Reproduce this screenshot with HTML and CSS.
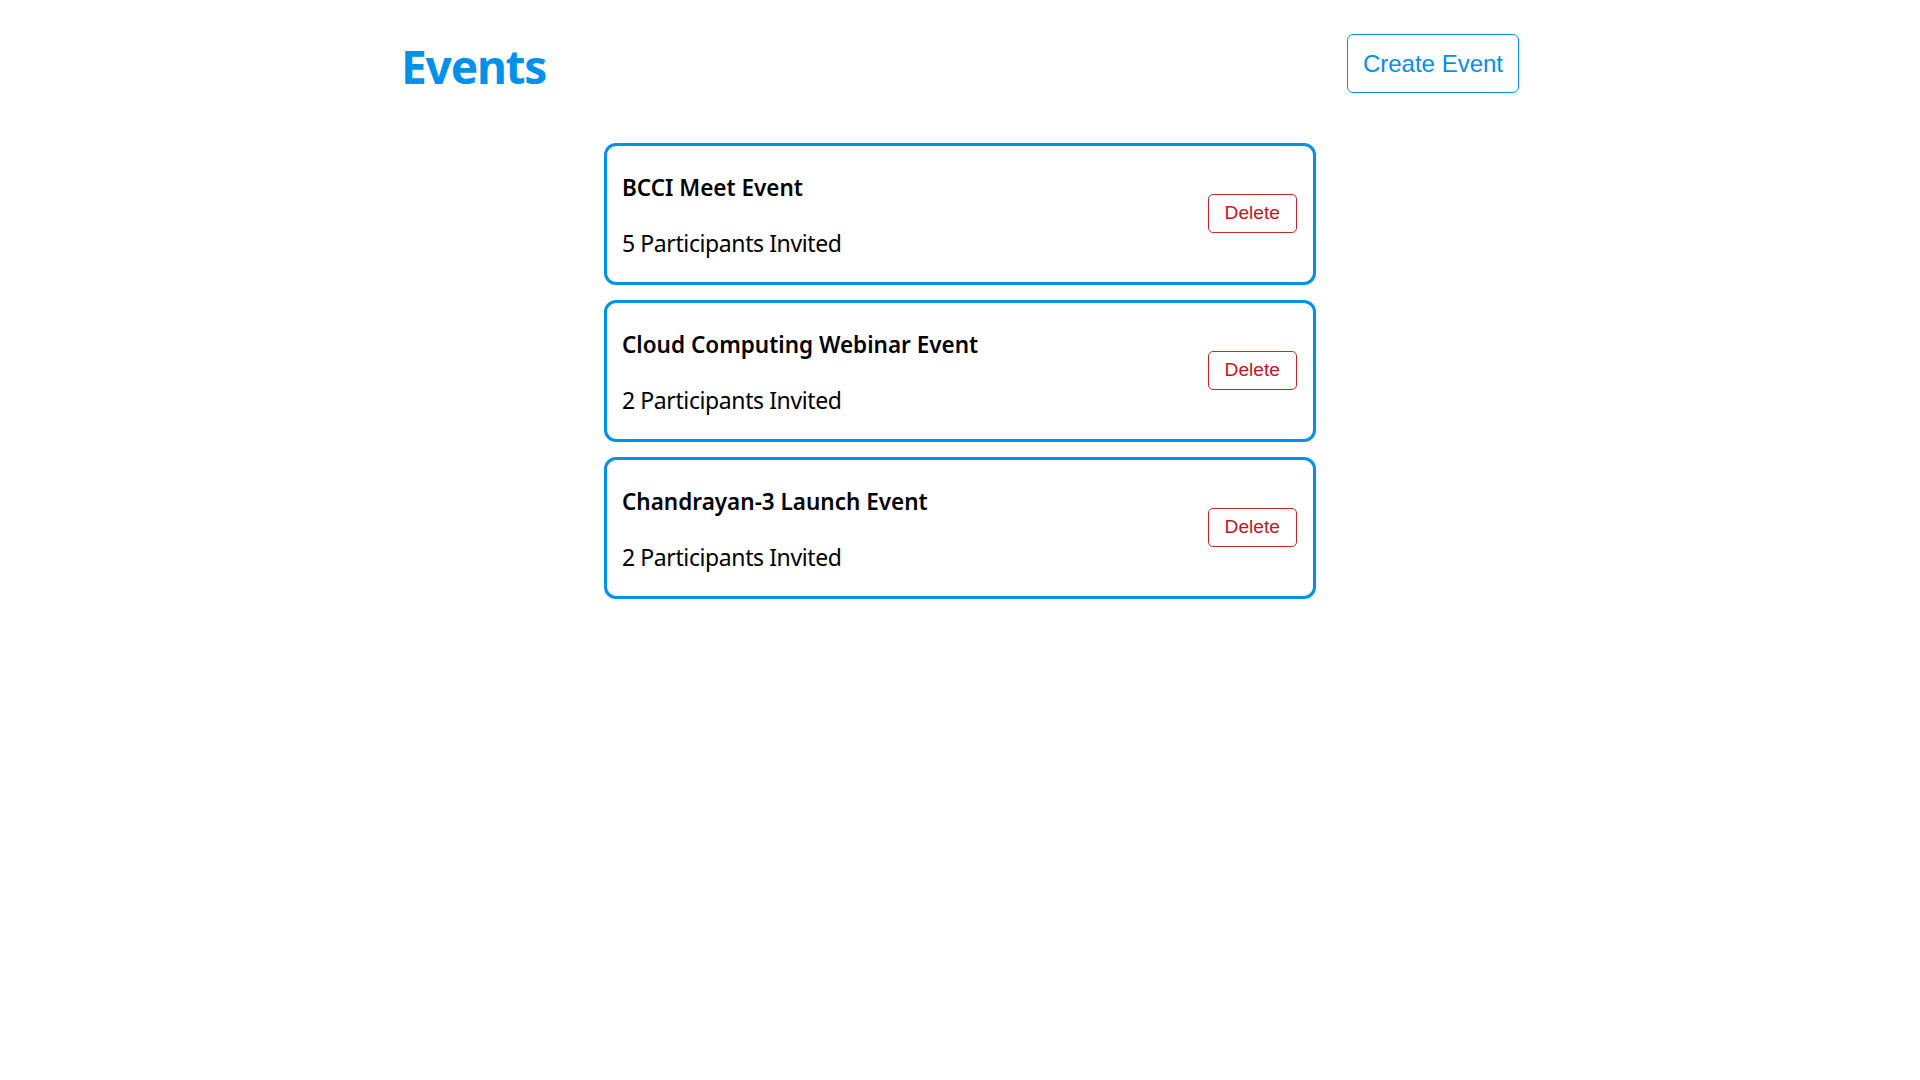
FILE: index.html
```html
<!DOCTYPE html>
<html lang="en">
<head>
<meta charset="utf-8">
<title>Events</title>
<link rel="stylesheet" href="styles.css">
</head>
<body>
<div class="page">
  <header class="header">
    <h1 class="title">Events</h1>
    <button class="create-btn">Create Event</button>
  </header>
  <main class="list">
    <div class="card">
      <div class="card-info">
        <h3 class="card-title">BCCI Meet Event</h3>
        <p class="card-sub">5 Participants Invited</p>
      </div>
      <button class="delete-btn">Delete</button>
    </div>
    <div class="card">
      <div class="card-info">
        <h3 class="card-title">Cloud Computing Webinar Event</h3>
        <p class="card-sub">2 Participants Invited</p>
      </div>
      <button class="delete-btn">Delete</button>
    </div>
    <div class="card">
      <div class="card-info">
        <h3 class="card-title">Chandrayan-3 Launch Event</h3>
        <p class="card-sub">2 Participants Invited</p>
      </div>
      <button class="delete-btn">Delete</button>
    </div>
  </main>
</div>
</body>
</html>
```
FILE: styles.css
```css
html, body {
  margin: 0;
  padding: 0;
  background: #ffffff;
}

body {
  font-family: "Noto Sans", "Open Sans", sans-serif;
  color: #000;
}

.page {
  width: 1120px;
  margin: 0 auto;
}

.header {
  display: flex;
  justify-content: space-between;
  align-items: flex-start;
  padding-top: 34px;
}

.title {
  margin: 6px 0 0 1px;
  font-size: 46px;
  line-height: 52px;
  font-weight: 700;
  letter-spacing: -1.2px;
  color: #0091ea;
}

.create-btn {
  font-family: "Liberation Sans", Arial, sans-serif;
  font-size: 24px;
  line-height: 27px;
  color: #0091ea;
  background: #fff;
  border: 1px solid #0091ea;
  border-radius: 6px;
  padding: 15px 15px;
  margin: 0 1px 0 0;
  cursor: pointer;
}

.list {
  width: 712px;
  margin: 50px auto 0;
  display: flex;
  flex-direction: column;
  gap: 15px;
}

.card {
  display: flex;
  align-items: center;
  justify-content: space-between;
  border: 3px solid #0091ea;
  border-radius: 12px;
  padding: 27px 15px 23px 15px;
}

.card-info {
  display: flex;
  flex-direction: column;
  gap: 24px;
}

.card-title {
  margin: 0;
  font-size: 22.5px;
  line-height: 30px;
  font-weight: 600;
}

.card-sub {
  margin: 0;
  font-size: 23px;
  line-height: 32px;
  font-weight: 400;
  letter-spacing: -0.4px;
}

.delete-btn {
  font-family: "Liberation Sans", Arial, sans-serif;
  font-size: 19.2px;
  line-height: 22px;
  color: #c0171f;
  background: #fff;
  border: 1px solid #c62828;
  border-radius: 5px;
  padding: 7px 16px 8px;
  margin: 0 1px 5px 0;
  cursor: pointer;
}
```
